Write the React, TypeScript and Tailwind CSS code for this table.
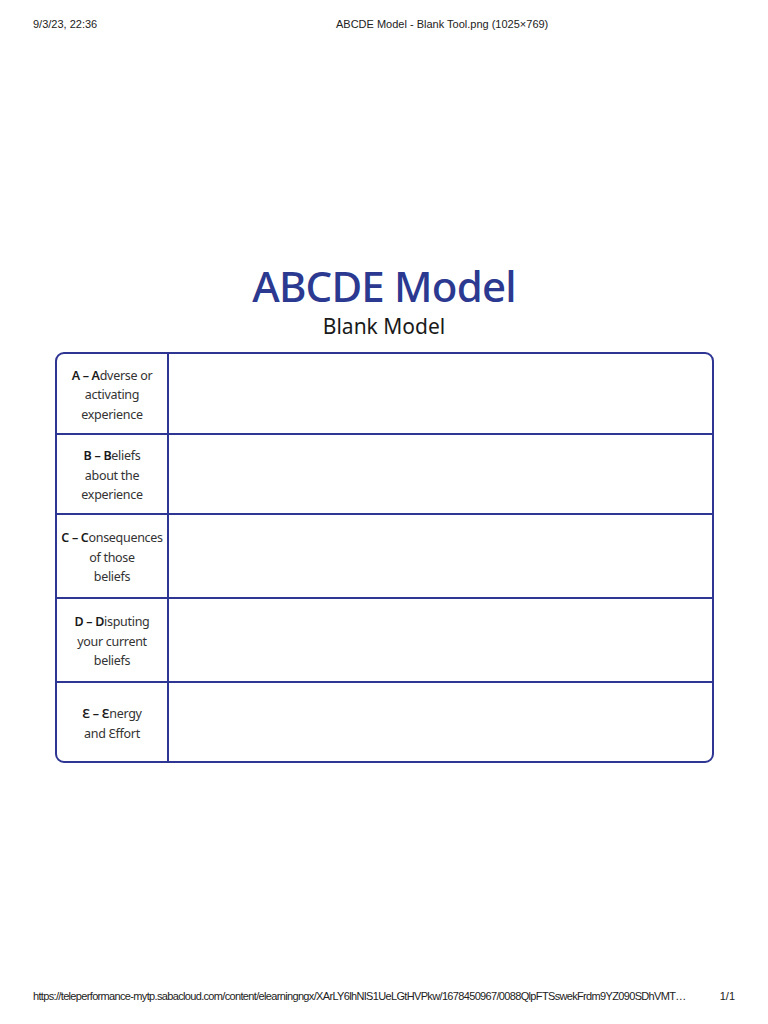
import React from "react"

interface Row {
  letter: string
  lines: React.ReactNode
  height: string
}

const ROWS: Row[] = [
  {
    letter: "A",
    height: "h-[81px]",
    lines: (
      <>
        <b className="font-semibold text-[#1a1a1a]">A – A</b>dverse or
        <br />
        activating
        <br />
        experience
      </>
    ),
  },
  {
    letter: "B",
    height: "h-[80px]",
    lines: (
      <>
        <b className="font-semibold text-[#1a1a1a]">B – B</b>eliefs
        <br />
        about the
        <br />
        experience
      </>
    ),
  },
  {
    letter: "C",
    height: "h-[84px]",
    lines: (
      <>
        <b className="font-semibold text-[#1a1a1a]">C – C</b>onsequences
        <br />
        of those
        <br />
        beliefs
      </>
    ),
  },
  {
    letter: "D",
    height: "h-[84px]",
    lines: (
      <>
        <b className="font-semibold text-[#1a1a1a]">D – D</b>isputing
        <br />
        your current
        <br />
        beliefs
      </>
    ),
  },
  {
    letter: "E",
    height: "h-[78px]",
    lines: (
      <>
        <b className="font-semibold text-[#1a1a1a]">Ɛ – Ɛ</b>nergy
        <br />
        and Ɛffort
      </>
    ),
  },
]

export default function App() {
  return (
    <div className="w-[768px] h-[1024px] bg-white flex flex-col font-['Liberation_Sans',sans-serif]">
      {/* Print header */}
      <div className="flex pt-[17px] pl-[33px] text-[11px] leading-[14px] text-[#222]">
        <span className="w-[303px]">9/3/23, 22:36</span>
        <span>ABCDE Model - Blank Tool.png (1025×769)</span>
      </div>

      {/* Title */}
      <div className="mt-[234px] flex flex-col items-center font-['Noto_Sans',sans-serif]">
        <h1 className="text-[42px] leading-[42px] font-medium text-[#2b3990] tracking-[-0.8px]">
          ABCDE Model
        </h1>
        <p className="text-[21px] leading-[26px] text-[#1a1a1a] mt-[6px]">Blank Model</p>
      </div>

      {/* Table */}
      <div className="mt-[13px] ml-[55px] w-[659px] border-2 border-[#2e3592] rounded-[9px] flex flex-col font-['Noto_Sans',sans-serif]">
        {ROWS.map((row, i) => (
          <div
            key={row.letter}
            className={`flex ${row.height} ${i < ROWS.length - 1 ? "border-b-2 border-[#2e3592]" : ""}`}
          >
            <div className="w-[112px] shrink-0 border-r-2 border-[#2e3592] flex items-center justify-center text-center text-[12.5px] leading-[19.5px] text-[#333] tracking-[-0.3px] pt-[3px]">
              <p>{row.lines}</p>
            </div>
            <div className="flex-1" />
          </div>
        ))}
      </div>

      {/* Print footer */}
      <div className="mt-auto mb-[21px] flex items-center pl-[33px] pr-[33px] text-[11px] leading-[14px] text-[#222]">
        <span className="whitespace-nowrap tracking-[-0.66px]">
          https://teleperformance-mytp.sabacloud.com/content/elearningngx/XArLY6lhNIS1UeLGtHVPkw/1678450967/0088QlpFTSswekFrdm9YZ090SDhVMT…
        </span>
        <span className="ml-auto">1/1</span>
      </div>
    </div>
  )
}
